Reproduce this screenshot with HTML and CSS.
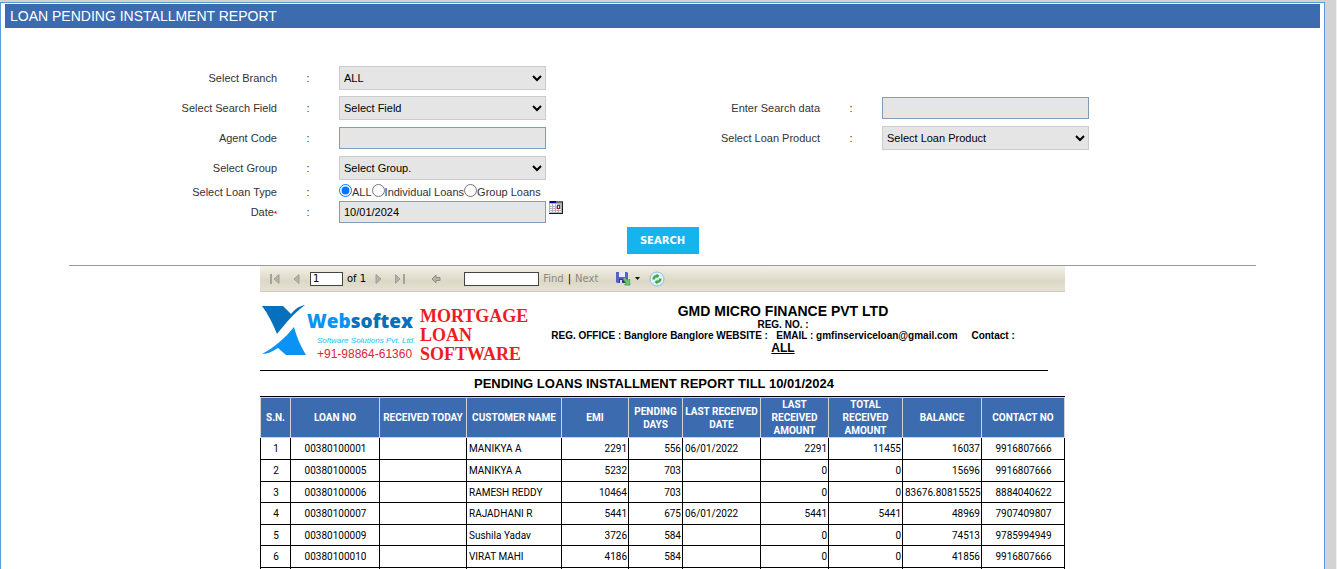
FILE: index.html
```
<!DOCTYPE html>
<html lang="en">
<head>
    <meta charset="UTF-8">
    <meta name="viewport" content="width=device-width, initial-scale=1.0">
    <title>Loan Pending Installment Report</title>
    <link rel="stylesheet" href="styles.css">
</head>
<body>

<div class="panel">
    <h1 class="title-bar">LOAN PENDING INSTALLMENT REPORT</h1>

    <form class="search-form" onsubmit="return false">
        <div class="fields">
            <label class="label" for="branch">Select Branch</label>
            <span class="colon">:</span>
            <select id="branch"><option>ALL</option></select>

            <label class="label first" for="searchField">Select Search Field</label>
            <span class="colon">:</span>
            <select id="searchField"><option>Select Field</option></select>
            <label class="label" for="searchData">Enter Search data</label>
            <span class="colon">:</span>
            <input type="text" id="searchData">

            <label class="label first" for="agentCode">Agent Code</label>
            <span class="colon">:</span>
            <input type="text" id="agentCode">
            <label class="label" for="product">Select Loan Product</label>
            <span class="colon">:</span>
            <select id="product"><option>Select Loan Product</option></select>

            <label class="label first" for="group">Select Group</label>
            <span class="colon">:</span>
            <select id="group"><option>Select Group.</option></select>

            <span class="label first" id="typeLabel">Select Loan Type</span>
            <span class="colon">:</span>
            <div class="radios" role="radiogroup" aria-labelledby="typeLabel">
                <input type="radio" name="loanType" id="typeAll" checked><label for="typeAll">ALL</label>
                <input type="radio" name="loanType" id="typeInd"><label for="typeInd">Individual Loans</label>
                <input type="radio" name="loanType" id="typeGroup"><label for="typeGroup">Group Loans</label>
            </div>

            <label class="label first" for="date">Date<span class="required">*</span></label>
            <span class="colon">:</span>
            <div class="date-field">
                <input type="text" id="date" value="10/01/2024">
                <button type="button" class="icon-btn" aria-label="Pick date">
                    <svg width="14" height="13" viewBox="0 0 14 13" shape-rendering="crispEdges">
                        <rect width="14" height="13" fill="#b9b3b9"/>
                        <path d="M1 3h2v2H1zM4 3h2v2H4zM7 3h1v2H7zM1 6h2v1H1zM4 6h2v1H4zM1 8h2v1H1zM4 8h2v1H4zM7 8h2v1H7zM10 8h2v1h-2zM1 10h2v1H1zM4 10h2v1H4zM7 10h2v1H7zM10 10h2v1h-2z" fill="#fff"/>
                        <rect width="14" height="2" fill="#6b6b75"/>
                        <rect x="1" width="6" height="2" fill="#00009c"/>
                        <path d="M8 4h3v4H8z" fill="#b01030"/>
                        <path d="M9 5h1v2H9z" fill="#fff"/>
                        <path d="M13 1h1v12H0v-1h13z" fill="#201820"/>
                    </svg>
                </button>
            </div>
        </div>
        <button type="submit" class="search-btn">SEARCH</button>
    </form>

    <hr>

    <div class="report">
        <div class="toolbar">
            <button type="button" class="icon-btn" aria-label="First page">
                <svg width="12" height="10" viewBox="0 0 12 10"><path d="M1 0h2v10H1z" fill="#a3a29d"/><path d="M5 5l5-4.500v9z" fill="#b3b2ad" stroke="#a09f9a"/></svg>
            </button>
            <button type="button" class="icon-btn" aria-label="Previous page">
                <svg width="8" height="10" viewBox="0 0 8 10"><path d="M1 5l5-4.500v9z" fill="#b3b2ad" stroke="#a09f9a"/></svg>
            </button>
            <input type="text" class="page-no" value="1" aria-label="Page number">
            <span class="of">of 1</span>
            <button type="button" class="icon-btn" aria-label="Next page">
                <svg width="8" height="10" viewBox="0 0 8 10"><path d="M2 .5L7 5 2 9.500z" fill="#b3b2ad" stroke="#a09f9a"/></svg>
            </button>
            <button type="button" class="icon-btn" aria-label="Last page">
                <svg width="12" height="10" viewBox="0 0 12 10"><path d="M1.500 .5L6 5 1.500 9.500z" fill="#b3b2ad" stroke="#a09f9a"/><path d="M9 0h2v10H9z" fill="#a3a29d"/></svg>
            </button>
            <button type="button" class="icon-btn back" aria-label="Back to parent report">
                <svg width="10" height="10" viewBox="0 0 10 10"><path d="M1 5l4-4v2.500h4v3H5V9z" fill="#b3b2ad" stroke="#8f8d86"/></svg>
            </button>
            <input type="text" class="find-text" aria-label="Find text">
            <a href="#" class="find">Find</a>
            <span class="bar">|</span>
            <a href="#" class="find">Next</a>
            <button type="button" class="icon-btn export" aria-label="Export">
                <svg width="24" height="16" viewBox="0 0 24 16">
                    <path d="M0 1h11l1 1v10H1l-1-1z" fill="#5a5fc8"/>
                    <path d="M3 1h6v5H3z" fill="#e8ebff"/>
                    <path d="M3 8h6v4H3z" fill="#34378c"/>
                    <path d="M4 9h2v3H4z" fill="#dfe2ff"/>
                    <path d="M7 8l1.500-1.500 3.500 3L13.500 8l.5 6H8.500L10 12z" fill="#6cc46c" stroke="#4a9a55" stroke-width=".8"/>
                    <path d="M19 6h5l-2.500 3z" fill="#111"/>
                </svg>
            </button>
            <button type="button" class="icon-btn" aria-label="Refresh">
                <svg width="16" height="16" viewBox="0 0 16 16">
                    <circle cx="8" cy="8" r="7" fill="#e4f1fb" stroke="#8fbbe0"/>
                    <path d="M3.500 8.500a4 4 0 0 1 4-4.500V2.500L10.500 5 7.500 7.500V6A2.500 2.500 0 0 0 6 8.500z" fill="#3daa4a"/>
                    <path d="M12.500 7.500a4 4 0 0 1-4 4.500v1.500L5.500 11l3-2.500V10A2.500 2.500 0 0 0 10 7.500z" fill="#3daa4a"/>
                </svg>
            </button>
        </div>

        <div class="report-head">
            <div class="logo">
                <svg width="46" height="52" viewBox="0 0 46 52">
                    <path d="M1 2h21l8 8C34 5 38 2 44 1 33 9 24 20 16 30 12 20 7 10 1 2z" fill="#0670bd"/>
                    <path d="M33 23c3 11 7 20 12 28H25l-8-7C12 47 7 50 1 50 14 43 24 34 33 23z" fill="#0a93f5"/>
                </svg>
                <div class="logo-text">
                    <div class="brand"><span>Web</span>softex</div>
                    <div class="tagline">Software Solutions Pvt. Ltd.</div>
                    <div class="phone">+91-98864-61360</div>
                </div>
                <div class="product">MORTGAGE<br>LOAN<br>SOFTWARE</div>
            </div>
            <div class="company">
                <h2>GMD MICRO FINANCE PVT LTD</h2>
                <p>REG. NO. :</p>
                <p>REG. OFFICE : Banglore Banglore WEBSITE : &nbsp; EMAIL : gmfinserviceloan@gmail.com &nbsp; &nbsp; Contact :</p>
                <p class="branch">ALL</p>
            </div>
        </div>

        <h3 class="report-title">PENDING LOANS INSTALLMENT REPORT TILL 10/01/2024</h3>

        <table>
            <colgroup>
                <col class="c-sn"><col class="c-loan"><col class="c-today"><col class="c-name"><col class="c-emi"><col class="c-days">
                <col class="c-date"><col class="c-last"><col class="c-total"><col class="c-bal"><col class="c-contact">
            </colgroup>
            <thead>
                <tr>
                    <th>S.N.</th><th>LOAN NO</th><th>RECEIVED TODAY</th><th>CUSTOMER NAME</th><th>EMI</th><th>PENDING DAYS</th>
                    <th>LAST RECEIVED DATE</th><th>LAST RECEIVED AMOUNT</th><th>TOTAL RECEIVED AMOUNT</th><th>BALANCE</th><th>CONTACT NO</th>
                </tr>
            </thead>
            <tbody>
                <tr><td class="mid">1</td><td class="mid">00380100001</td><td></td><td>MANIKYA A</td><td class="num">2291</td><td class="num">556</td><td>06/01/2022</td><td class="num">2291</td><td class="num">11455</td><td class="num">16037</td><td class="mid">9916807666</td></tr>
                <tr><td class="mid">2</td><td class="mid">00380100005</td><td></td><td>MANIKYA A</td><td class="num">5232</td><td class="num">703</td><td></td><td class="num">0</td><td class="num">0</td><td class="num">15696</td><td class="mid">9916807666</td></tr>
                <tr><td class="mid">3</td><td class="mid">00380100006</td><td></td><td>RAMESH REDDY</td><td class="num">10464</td><td class="num">703</td><td></td><td class="num">0</td><td class="num">0</td><td class="num">83676.80815525</td><td class="mid">8884040622</td></tr>
                <tr><td class="mid">4</td><td class="mid">00380100007</td><td></td><td>RAJADHANI R</td><td class="num">5441</td><td class="num">675</td><td>06/01/2022</td><td class="num">5441</td><td class="num">5441</td><td class="num">48969</td><td class="mid">7907409807</td></tr>
                <tr><td class="mid">5</td><td class="mid">00380100009</td><td></td><td>Sushila Yadav</td><td class="num">3726</td><td class="num">584</td><td></td><td class="num">0</td><td class="num">0</td><td class="num">74513</td><td class="mid">9785994949</td></tr>
                <tr><td class="mid">6</td><td class="mid">00380100010</td><td></td><td>VIRAT MAHI</td><td class="num">4186</td><td class="num">584</td><td></td><td class="num">0</td><td class="num">0</td><td class="num">41856</td><td class="mid">9916807666</td></tr>
                <tr><td></td><td></td><td></td><td></td><td></td><td></td><td></td><td></td><td></td><td></td><td></td></tr>
            </tbody>
        </table>
    </div>
</div>

</body>
</html>
```
FILE: styles.css
```
* {
    box-sizing: border-box;
}
body {
    margin: 0;
    height: 100vh;
    overflow: hidden;
    padding: 2px 11px 0 0;
    border-right: 1px solid #f0f0f0;
    background: #d3d3d3;
    font-family: "Liberation Sans", Arial, sans-serif;
    font-size: 11px;
    color: #333;
}
h1, h2, h3, p {
    margin: 0;
}
.panel {
    min-height: 100vh;
    padding: 1px 4px;
    border: 1px solid #5b9bd5;
    background: #fff;
}
.title-bar {
    height: 24px;
    padding-left: 5px;
    background: #3c6bb0;
    color: #fff;
    font-size: 14px;
    font-weight: normal;
    line-height: 24px;
}
.search-form {
    margin: 0 64px;
    padding-top: 35px;
    text-align: center;
}
.fields {
    display: grid;
    grid-template-columns: 208fr 62px 207px 274fr 62px 207px 167fr;
    grid-template-rows: 30px 30px 30px 30px 17px 23px;
    align-items: center;
    text-align: left;
}
.label {
    text-align: right;
}
.first {
    grid-column: 1;
}
.colon {
    text-align: center;
}
.required {
    color: #f00;
    font-size: 8px;
    font-weight: bold;
}
select, input[type="text"] {
    width: 100%;
    height: 24px;
    border: 1px solid #ccc;
    background: #e5e5e5;
    font-family: inherit;
    font-size: 11px;
    color: #000;
}
.fields input[type="text"] {
    height: 22px;
    padding: 0 4px;
    border-color: #7f9db9;
}
.radios {
    display: flex;
    align-items: center;
    height: 17px;
}
.radios input {
    margin: 0 0 3px;
}
.date-field {
    display: flex;
    align-items: flex-start;
    gap: 3px;
}
.date-field input {
    flex: none;
}
.icon-btn {
    padding: 0;
    border: none;
    background: none;
    line-height: 0;
    cursor: pointer;
}
.search-btn {
    width: 72px;
    height: 27px;
    margin-top: 4px;
    padding: 0;
    border: none;
    background: #15b4ec;
    color: #fff;
    font-family: "DejaVu Sans", Verdana, sans-serif;
    font-size: 10px;
    font-weight: bold;
    cursor: pointer;
}
hr {
    height: 1px;
    margin: 11px 64px 0;
    border: none;
    background: #999;
}
.report {
    width: 805px;
    margin: 0 auto;
    color: #000;
}
.toolbar {
    display: flex;
    align-items: center;
    height: 26px;
    padding-left: 9px;
    border-bottom: 1px solid #ccc9bd;
    background: linear-gradient(#f3f1e6, #dcd8c6 60%, #e6e2d4);
    font-family: "DejaVu Sans", Verdana, sans-serif;
    font-size: 10px;
}
.toolbar input[type="text"] {
    height: 14px;
    padding: 0 2px;
    border-color: #444;
    background: #fff;
    font-family: inherit;
    font-size: 10px;
}
.toolbar .page-no {
    width: 33px;
    margin-left: 9px;
}
.toolbar .icon-btn + .icon-btn {
    margin-left: 12px;
}
.toolbar .of {
    margin: 0 8px 0 4px;
}
.toolbar .icon-btn.back {
    margin: 0 23px 0 25px;
}
.toolbar .find-text {
    width: 75px;
    margin-right: 4px;
}
.find {
    color: #8b8982;
    text-decoration: none;
}
.bar {
    margin: 0 4px;
}
.toolbar .export {
    margin-left: 18px;
}
.toolbar .export + .icon-btn {
    margin-left: 9px;
}
.report-head {
    display: flex;
    width: 788px;
    height: 79px;
    padding-top: 12px;
    border-bottom: 1px solid #000;
}
.logo {
    display: flex;
    flex: none;
    width: 258px;
    padding-left: 1px;
}
.logo svg {
    flex: none;
}
.logo-text {
    flex: none;
    width: 113px;
    padding-top: 3px;
    white-space: nowrap;
}
.brand {
    color: #0670bd;
    font-family: "Open Sans", sans-serif;
    font-size: 19px;
    font-weight: 800;
    line-height: 28px;
}
.brand span {
    color: #0a93f5;
}
.tagline {
    padding-left: 10px;
    color: #12c4f5;
    font-size: 8px;
    font-style: italic;
    line-height: 12px;
}
.phone {
    padding-left: 10px;
    color: #d9263a;
    font-size: 12px;
    line-height: 14px;
}
.product {
    padding-top: 3px;
    color: #ed1c24;
    font-family: "Liberation Serif", serif;
    font-size: 18px;
    font-weight: bold;
    line-height: 19px;
}
.company {
    flex: 1;
    text-align: center;
    font-size: 10px;
    font-weight: bold;
    line-height: 11px;
    white-space: nowrap;
}
.company h2 {
    font-size: 14px;
    line-height: 15px;
}
.company .branch {
    font-size: 12px;
    line-height: 14px;
    text-decoration: underline;
}
.report-title {
    padding-right: 17px;
    border-bottom: 1px solid #000;
    font-size: 13px;
    line-height: 25px;
    text-align: center;
}
table {
    width: 804px;
    table-layout: fixed;
    border-collapse: collapse;
    font-family: Roboto, sans-serif;
    font-size: 10px;
}
.c-sn { width: 30px; }
.c-loan { width: 89px; }
.c-today { width: 87px; }
.c-name { width: 95px; }
.c-emi { width: 67px; }
.c-days { width: 54px; }
.c-date { width: 78px; }
.c-last { width: 68px; }
.c-total { width: 74px; }
.c-bal { width: 79px; }
.c-contact { width: 83px; }
th {
    height: 40px;
    padding: 0 2px;
    border: 1px solid #d3d3d3;
    background: #3c6bb0;
    color: #fff;
    line-height: 13px;
}
td {
    height: 22px;
    padding: 0 1px 0 2px;
    border: 1px solid #000;
    line-height: 13px;
}
tr:nth-child(2n+3) td {
    height: 21px;
}
.num {
    text-align: right;
}
.mid {
    text-align: center;
}
```
